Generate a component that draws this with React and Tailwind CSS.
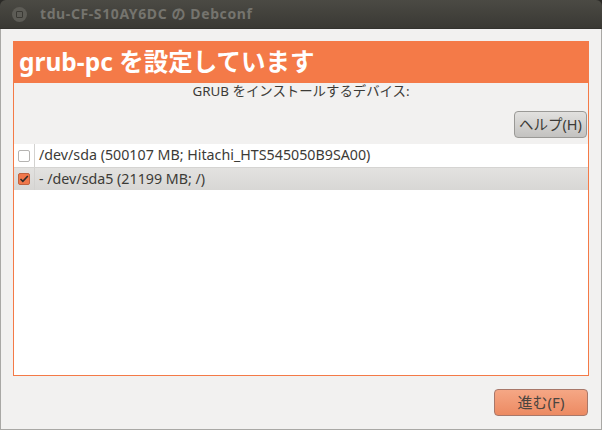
function Titlebar() {
  return (
    <div className="h-[29px] shrink-0 rounded-t-[6px] bg-gradient-to-b from-[#4b4a44] to-[#3a3934] flex items-center pl-[12px] border-b border-[#33322e]">
      <div className="w-[15px] h-[15px] rounded-full bg-[#5d5c56] flex items-center justify-center">
        <div className="w-[7px] h-[7px] border border-[#3a3934] rounded-[1px]" />
      </div>
      <span className="ml-[13px] text-[14px] leading-none font-bold text-[#75746e] tracking-[0.6px] whitespace-nowrap">
        tdu-CF-S10AY6DC の Debconf
      </span>
    </div>
  );
}

function Row({ checked, children }) {
  return (
    <div
      className={
        checked
          ? "h-[23px] flex items-center bg-gradient-to-b from-[#e3e2e0] to-[#d8d7d5] border-t border-[#d5d4d2]"
          : "h-[23px] flex items-center bg-white"
      }
    >
      <div className="w-[21px] h-full flex items-center justify-center border-r border-[#d3d2d0] shrink-0">
        {checked ? (
          <div className="w-[12px] h-[12px] rounded-[2px] bg-[#f0774a] border border-[#c0623f] flex items-center justify-center">
            <svg viewBox="0 0 12 12" className="w-[12px] h-[12px]">
              <path d="M1.8 6 L4.6 8.8 L10.6 2.4" fill="none" stroke="#2e2c2a" strokeWidth="1.9" />
            </svg>
          </div>
        ) : (
          <div className="w-[12px] h-[12px] rounded-[2px] bg-white border border-[#b5b4b2]" />
        )}
      </div>
      <span className="ml-[4px] text-[14.25px] leading-none text-[#3c3b37] whitespace-nowrap">{children}</span>
    </div>
  );
}

export default function App() {
  return (
    <div
      className="w-[602px] h-[430px] flex flex-col overflow-hidden bg-[#2b2a27]"
      style={{ fontFamily: '"Noto Sans", "Noto Sans CJK JP", sans-serif' }}
    >
      <Titlebar />
      <div className="flex-1 flex flex-col bg-[#f2f1f0] border-x border-b border-[#a9a8a5] px-[12px] pt-[12px] min-h-0">
        <div className="h-[335px] shrink-0 flex flex-col border border-[#f47a47] border-t-0 bg-[#f2f1f0]">
          <div className="h-[42px] -mx-px shrink-0 bg-[#f47a48] flex items-center pl-[6px]">
            <span className="text-[24.5px] leading-none font-bold text-white whitespace-nowrap">grub-pc を設定しています</span>
          </div>
          <div className="h-[16px] mt-px flex items-center justify-center text-[13.4px] leading-none text-[#3c3b37] whitespace-nowrap">
            GRUB をインストールするデバイス:
          </div>
          <div className="flex justify-end pr-[1px] pt-[11px] pb-[6px]">
            <button className="w-[73px] h-[27px] rounded-[4px] border border-[#9a9996] bg-gradient-to-b from-[#e2e1df] to-[#c3c2c0] flex items-center justify-center text-[14.5px] leading-none text-[#3c3b37] whitespace-nowrap">
              ヘルプ(H)
            </button>
          </div>
          <div className="flex-1 flex flex-col bg-white min-h-0">
            <Row>/dev/sda (500107 MB; Hitachi_HTS545050B9SA00)</Row>
            <Row checked>- /dev/sda5 (21199 MB; /)</Row>
          </div>
        </div>
        <div className="flex justify-end pt-[13px] pr-[1px]">
          <button className="w-[94px] h-[27px] rounded-[4px] border border-[#a8786a] bg-gradient-to-b from-[#f5a785] to-[#ec8a62] flex items-center justify-center text-[15px] leading-none text-[#4a4540] whitespace-nowrap">
            進む(F)
          </button>
        </div>
      </div>
    </div>
  );
}
